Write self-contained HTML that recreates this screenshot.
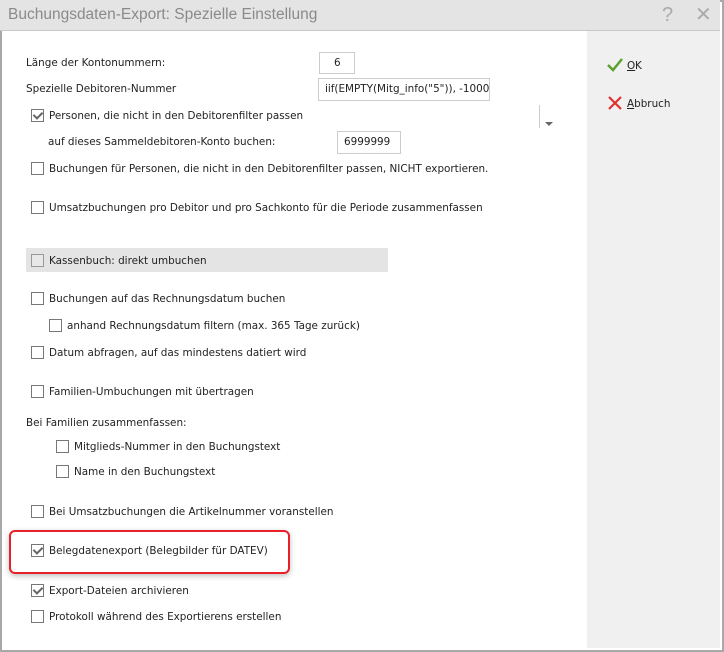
<!DOCTYPE html>
<html><head><meta charset="utf-8"><style>
*{margin:0;padding:0;box-sizing:border-box}
body{width:724px;height:652px;background:#fff;font-family:"DejaVu Sans","Liberation Sans",sans-serif;font-size:10.4px;color:#222;position:relative;overflow:hidden}
.win{position:absolute;left:0;top:0;width:724px;height:652px;border:2px solid #a8a8a8}
.title{position:absolute;left:0;top:0;width:720px;height:31px;background:#e4e4e4;border-bottom:1px solid #c8c8c8;color:#8a8a8a;font-size:15.5px;font-family:"Liberation Sans",sans-serif;line-height:30px;padding-left:8px}
.side{position:absolute;left:587px;top:31px;width:133px;height:617px;background:#f0f0f0}
.a{position:absolute;white-space:nowrap;line-height:14px;margin-top:1px}
.cb{position:absolute;width:13px;height:13px;border:1px solid #777;background:#fff}
.cb.c::after{content:"";position:absolute;left:3px;top:0px;width:4px;height:7px;border:solid #666;border-width:0 2px 2px 0;transform:rotate(45deg)}
.inp{position:absolute;border:1px solid #ccc;background:#fff;line-height:21px;padding-left:6px;white-space:nowrap;overflow:hidden}
</style></head><body>
<div class="win"></div>
<div class="title">Buchungsdaten-Export: Spezielle Einstellung
<span style="position:absolute;left:662px;top:0;font-size:20px;color:#aaa">?</span>
<span style="position:absolute;left:695px;top:0;font-size:20px;color:#aaa">✕</span></div>
<div class="side"></div>
<svg style="position:absolute;left:606px;top:57px" width="18" height="16"><path d="M2 8 L7 13 L16 2" stroke="#5aa02c" stroke-width="2.5" fill="none"/></svg>
<div class="a" style="left:627px;top:58px;text-decoration:underline">O</div><div class="a" style="left:635px;top:58px">K</div>
<svg style="position:absolute;left:607px;top:95px" width="16" height="16"><path d="M2 2 L14 14 M14 2 L2 14" stroke="#e03030" stroke-width="2.2"/></svg>
<div class="a" style="left:627px;top:96px"><u>A</u>bbruch</div>

<div class="a" style="left:26px;top:55px">Länge der Kontonummern:</div>
<div class="inp" style="left:319px;top:52px;width:36px;height:22px;padding-left:14px">6</div>
<div class="a" style="left:26px;top:81px">Spezielle Debitoren-Nummer</div>
<div class="inp" style="left:318px;top:78px;width:172px;height:23px">iif(EMPTY(Mitg_info("5")), -10000</div>
<div style="position:absolute;left:539px;top:105px;width:1px;height:23px;background:#ccc"></div>
<div style="position:absolute;left:545px;top:122px;border:4px solid transparent;border-top:4px solid #666"></div>
<div class="cb c" style="left:31px;top:109px"></div><div class="a" style="left:49px;top:108px">Personen, die nicht in den Debitorenfilter passen</div>
<div class="a" style="left:48px;top:134px">auf dieses Sammeldebitoren-Konto buchen:</div>
<div class="inp" style="left:337px;top:131px;width:64px;height:23px">6999999</div>
<div class="cb" style="left:31px;top:162px"></div><div class="a" style="left:49px;top:161px">Buchungen für Personen, die nicht in den Debitorenfilter passen, NICHT exportieren.</div>
<div class="cb" style="left:31px;top:201px"></div><div class="a" style="left:49px;top:200px">Umsatzbuchungen pro Debitor und pro Sachkonto für die Periode zusammenfassen</div>
<div style="position:absolute;left:26px;top:248px;width:362px;height:24px;background:#e4e4e4"></div>
<div class="cb" style="left:31px;top:254px;background:#e8e8e8;border-color:#999"></div><div class="a" style="left:49px;top:253px">Kassenbuch: direkt umbuchen</div>
<div class="cb" style="left:31px;top:292px"></div><div class="a" style="left:49px;top:291px">Buchungen auf das Rechnungsdatum buchen</div>
<div class="cb" style="left:49px;top:319px"></div><div class="a" style="left:67px;top:318px">anhand Rechnungsdatum filtern (max. 365 Tage zurück)</div>
<div class="cb" style="left:31px;top:346px"></div><div class="a" style="left:49px;top:345px">Datum abfragen, auf das mindestens datiert wird</div>
<div class="cb" style="left:31px;top:385px"></div><div class="a" style="left:49px;top:384px">Familien-Umbuchungen mit übertragen</div>
<div class="a" style="left:26px;top:415px">Bei Familien zusammenfassen:</div>
<div class="cb" style="left:56px;top:440px"></div><div class="a" style="left:74px;top:439px">Mitglieds-Nummer in den Buchungstext</div>
<div class="cb" style="left:56px;top:465px"></div><div class="a" style="left:74px;top:464px">Name in den Buchungstext</div>
<div class="cb" style="left:31px;top:505px"></div><div class="a" style="left:49px;top:504px">Bei Umsatzbuchungen die Artikelnummer voranstellen</div>
<div style="position:absolute;left:9px;top:530px;width:281px;height:44px;border:2px solid #e8202a;border-radius:6px;box-shadow:0 2px 6px rgba(0,0,0,.25)"></div>
<div class="cb c" style="left:31px;top:544px"></div><div class="a" style="left:49px;top:543px">Belegdatenexport (Belegbilder für DATEV)</div>
<div class="cb c" style="left:31px;top:584px"></div><div class="a" style="left:49px;top:583px">Export-Dateien archivieren</div>
<div class="cb" style="left:31px;top:610px"></div><div class="a" style="left:49px;top:609px">Protokoll während des Exportierens erstellen</div>
</body></html>
